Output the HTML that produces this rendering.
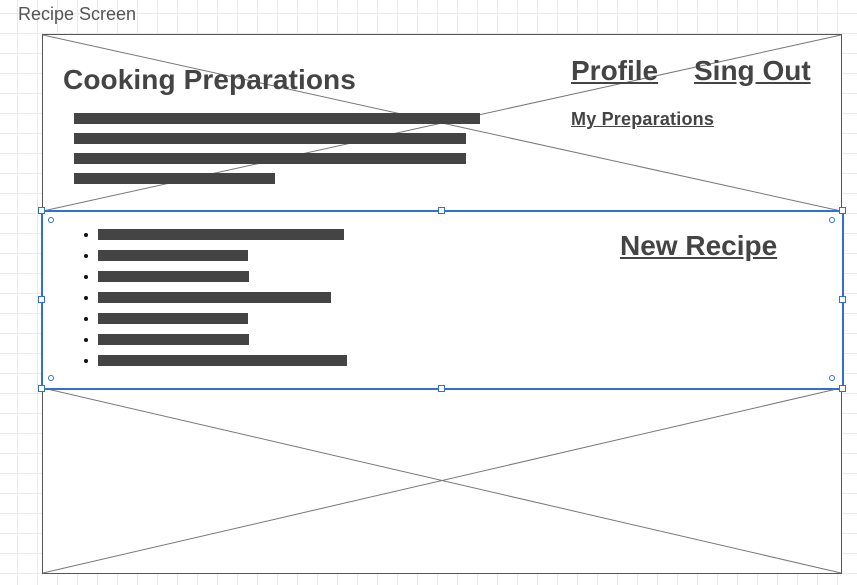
<!DOCTYPE html>
<html><head><style>
body{margin:0;width:857px;height:585px;overflow:hidden;background-color:#fff;
background-image:linear-gradient(#ebebeb 1px,transparent 1px),linear-gradient(90deg,#ebebeb 1px,transparent 1px);
background-size:20px 20px;background-position:0 13px,17px 0;font-family:"Liberation Sans",sans-serif;position:relative}
.a{position:absolute}
.bar{position:absolute;background:#444;height:11px}
.lnk{position:absolute;color:#444;font-weight:bold;text-decoration:underline}
.dot{position:absolute;width:4px;height:4px;border-radius:50%;background:#111}
.h{position:absolute;width:5px;height:5px;border:1px solid #2f6fd6;background:#fff}
.c{position:absolute;width:4px;height:4px;border:1px solid #2f6fd6;border-radius:50%;background:#fff}
</style></head><body>
<div class="a" style="left:18px;top:4px;font-size:18px;color:#555">Recipe Screen</div>
<div class="a" style="left:42px;top:34px;width:798px;height:538px;border:1px solid #555;background:#fff"></div>
<svg class="a" style="left:0;top:0" width="857" height="585">
<line x1="43" y1="35" x2="841" y2="211" stroke="#777"/>
<line x1="841" y1="35" x2="43" y2="211" stroke="#777"/>
<line x1="43" y1="388" x2="841" y2="573" stroke="#777"/>
<line x1="841" y1="388" x2="43" y2="573" stroke="#777"/>
</svg>
<div class="a" style="left:63px;top:64px;font-size:28px;font-weight:bold;color:#444;letter-spacing:0.1px">Cooking Preparations</div>
<div class="bar" style="left:74px;top:113px;width:406px"></div>
<div class="bar" style="left:74px;top:133px;width:392px"></div>
<div class="bar" style="left:74px;top:153px;width:392px"></div>
<div class="bar" style="left:74px;top:173px;width:201px"></div>
<div class="lnk" style="left:571px;top:55px;font-size:28px">Profile</div>
<div class="lnk" style="left:694px;top:55px;font-size:28px">Sing Out</div>
<div class="lnk" style="left:571px;top:109px;font-size:18px;letter-spacing:0.2px">My Preparations</div>
<div class="a" style="left:41px;top:210px;width:799px;height:176px;border:2px solid #2f6fd6;background:#fff"></div>
<div class="lnk" style="left:620px;top:230px;font-size:28px">New Recipe</div>
<div class="dot" style="left:84px;top:233px"></div><div class="bar" style="left:98px;top:229px;width:246px"></div>
<div class="dot" style="left:84px;top:254px"></div><div class="bar" style="left:98px;top:250px;width:150px"></div>
<div class="dot" style="left:84px;top:275px"></div><div class="bar" style="left:98px;top:271px;width:151px"></div>
<div class="dot" style="left:84px;top:296px"></div><div class="bar" style="left:98px;top:292px;width:233px"></div>
<div class="dot" style="left:84px;top:317px"></div><div class="bar" style="left:98px;top:313px;width:150px"></div>
<div class="dot" style="left:84px;top:338px"></div><div class="bar" style="left:98px;top:334px;width:151px"></div>
<div class="dot" style="left:84px;top:359px"></div><div class="bar" style="left:98px;top:355px;width:249px"></div>
<div class="h" style="left:38px;top:207px"></div><div class="h" style="left:438px;top:207px"></div><div class="h" style="left:839px;top:207px"></div>
<div class="h" style="left:38px;top:296px"></div><div class="h" style="left:839px;top:296px"></div>
<div class="h" style="left:38px;top:385px"></div><div class="h" style="left:438px;top:385px"></div><div class="h" style="left:839px;top:385px"></div>
<div class="c" style="left:48px;top:217px"></div><div class="c" style="left:829px;top:217px"></div>
<div class="c" style="left:48px;top:375px"></div><div class="c" style="left:829px;top:375px"></div>
</body></html>
